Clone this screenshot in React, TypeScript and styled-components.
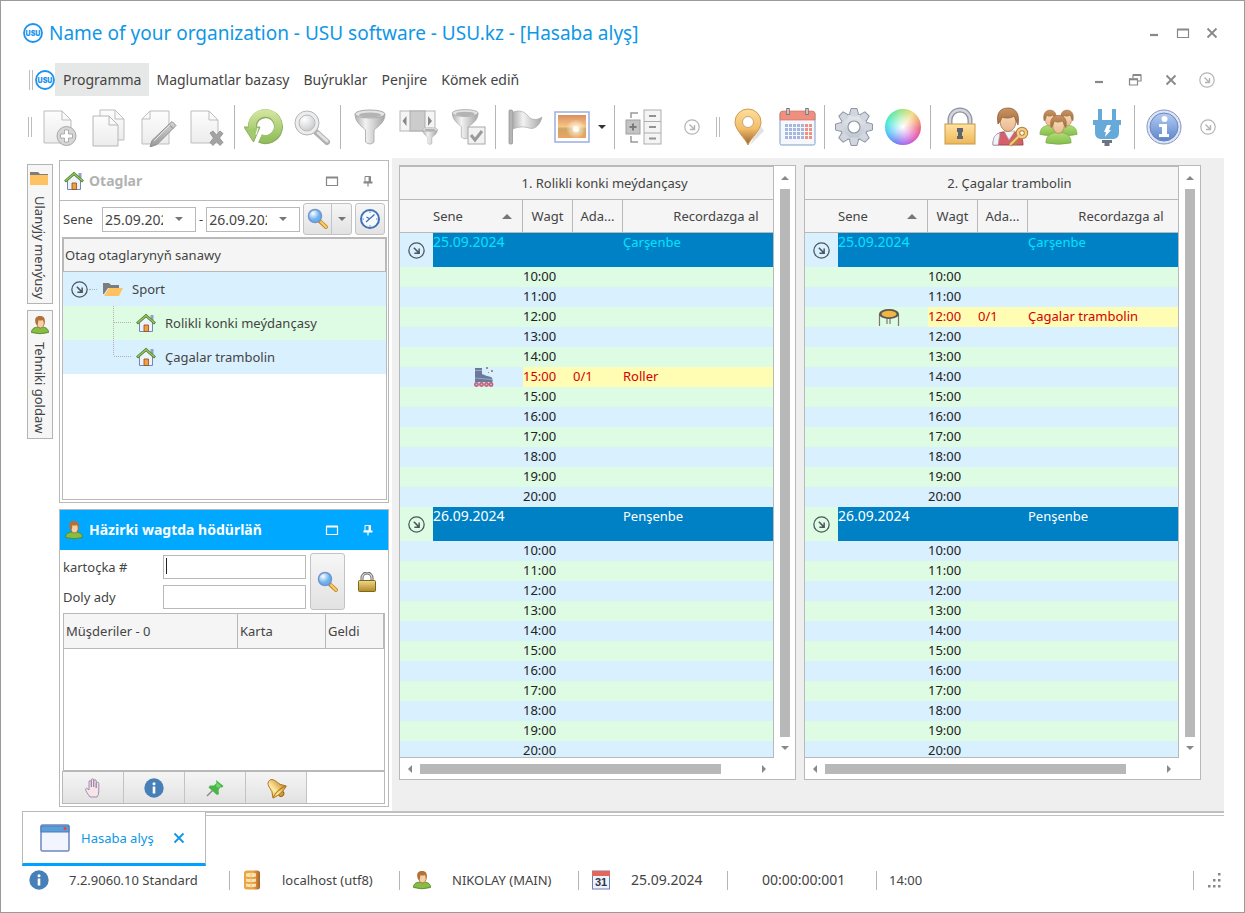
import React from "react";
import styled, { createGlobalStyle, css } from "styled-components";

/* ---------- base ---------- */

const UI_FONT = '"Noto Sans", "Open Sans", "DejaVu Sans", sans-serif';
const ACCENT = "#0f97e6";
const LINE = "#b9b9b9";
const BLUE_ROW = "#d9f0ff";
const GREEN_ROW = "#defbe3";

const GlobalStyle = createGlobalStyle`
  *, *::before, *::after { box-sizing: border-box; }
  body { margin: 0; background: #fff; }
  body, button, input { font-family: ${UI_FONT}; font-size: 13px; line-height: 18px; color: #444; }
  button { background: none; border: 0; padding: 0; cursor: pointer; }
  svg { display: block; flex: none; }
  ul { list-style: none; margin: 0; padding: 0; }
`;

/* ---------- icons ---------- */

const Defs = styled.svg`
  position: absolute;
  width: 0;
  height: 0;
`;

function Gradients() {
  const v = { x1: "0", y1: "0", x2: "0", y2: "1" };
  return (
    <Defs aria-hidden="true">
      <defs>
        <linearGradient id="paper" {...v}><stop offset="0" stopColor="#fdfdfd" /><stop offset="1" stopColor="#ececec" /></linearGradient>
        <linearGradient id="metal" x1="0" y1="0" x2="1" y2="0"><stop offset="0" stopColor="#b0b0b0" /><stop offset=".35" stopColor="#f2f2f2" /><stop offset="1" stopColor="#a4a4a4" /></linearGradient>
        <linearGradient id="grey" {...v}><stop offset="0" stopColor="#d4d4d4" /><stop offset="1" stopColor="#999" /></linearGradient>
        <linearGradient id="green" {...v}><stop offset="0" stopColor="#cfe39a" /><stop offset="1" stopColor="#94c060" /></linearGradient>
        <linearGradient id="gold" {...v}><stop offset="0" stopColor="#ffe3a0" /><stop offset="1" stopColor="#edb758" /></linearGradient>
        <linearGradient id="pin" {...v}><stop offset="0" stopColor="#ffdf9e" /><stop offset=".55" stopColor="#f2bd68" /><stop offset="1" stopColor="#99602f" /></linearGradient>
        <linearGradient id="brass" {...v}><stop offset="0" stopColor="#efd98a" /><stop offset="1" stopColor="#b08a28" /></linearGradient>
        <linearGradient id="bell" x1="0" y1="0" x2="1" y2="0"><stop offset="0" stopColor="#f0bc46" /><stop offset=".35" stopColor="#ffe9a4" /><stop offset="1" stopColor="#c78a22" /></linearGradient>
        <linearGradient id="db" x1="0" y1="0" x2="1" y2="0"><stop offset="0" stopColor="#e9a548" /><stop offset=".6" stopColor="#e6a142" /><stop offset="1" stopColor="#a8622a" /></linearGradient>
        <linearGradient id="sky" {...v}><stop offset="0" stopColor="#b4cdf2" /><stop offset="1" stopColor="#5c86cc" /></linearGradient>
        <linearGradient id="steel" {...v}><stop offset="0" stopColor="#e8ebf0" /><stop offset="1" stopColor="#bcc2cd" /></linearGradient>
        <linearGradient id="shirt" {...v}><stop offset="0" stopColor="#b3dd74" /><stop offset="1" stopColor="#84bd4c" /></linearGradient>
        <linearGradient id="hair" {...v}><stop offset="0" stopColor="#c99463" /><stop offset="1" stopColor="#a36c40" /></linearGradient>
        <linearGradient id="skin" {...v}><stop offset="0" stopColor="#fbe0c0" /><stop offset="1" stopColor="#e8b98c" /></linearGradient>
        <linearGradient id="sunset" {...v}><stop offset="0" stopColor="#d98f62" /><stop offset=".5" stopColor="#f7c484" /><stop offset=".6" stopColor="#cba469" /><stop offset="1" stopColor="#eea45c" /></linearGradient>
        <radialGradient id="glow"><stop offset="0" stopColor="#fffbe6" /><stop offset="1" stopColor="#fffbe6" stopOpacity="0" /></radialGradient>
        <radialGradient id="lens" cx=".4" cy=".35"><stop offset="0" stopColor="#fff" /><stop offset="1" stopColor="#c9cccf" /></radialGradient>
        <radialGradient id="blueLens" cx=".35" cy=".3"><stop offset="0" stopColor="#fff" /><stop offset="1" stopColor="#69b0ee" /></radialGradient>
      </defs>
    </Defs>
  );
}

type IconProps = { size?: number };
const Svg = ({ size = 40, box = 40, children }: { size?: number; box?: number; children: React.ReactNode }) => (
  <svg width={size} height={size} viewBox={`0 0 ${box} ${box}`} fill="none" aria-hidden="true">{children}</svg>
);

const UsuLogo = ({ size = 20 }: IconProps) => (
  <Svg size={size} box={20}>
    <circle cx="10" cy="10" r="9" stroke="#1e93ee" strokeWidth="1.8" fill="#fff" />
    <text x="10" y="12.700" textAnchor="middle" fontFamily="Inter, sans-serif" fontWeight="900" fontSize="7" fill="#1e93ee">USU</text>
  </Svg>
);

const PAGE = "M4 4H22L31 13V36H4Z";
const AddPage = () => (
  <Svg>
    <path d={PAGE} fill="url(#paper)" stroke="#bdbdbd" /><path d="M22 4V13H31" stroke="#bdbdbd" />
    <circle cx="26.500" cy="29" r="9.500" fill="#d6d6d6" stroke="#a8a8a8" />
    <path d="M24.500 23H28.500V27H32.500V31H28.500V35H24.500V31H20.500V27H24.500Z" fill="#fff" stroke="#a0a0a0" strokeWidth=".8" />
  </Svg>
);
const CopyPages = () => (
  <Svg>
    <path d="M11 3H26L35 12V33H11Z" fill="url(#paper)" stroke="#bdbdbd" /><path d="M26 3V12H35" stroke="#bdbdbd" />
    <path d="M4 9H20L29 18V39H4Z" fill="url(#paper)" stroke="#b6b6b6" /><path d="M20 9V18H29" stroke="#b6b6b6" />
  </Svg>
);
const EditPage = () => (
  <Svg>
    <path d="M12 4H31V37H4V12Z" fill="url(#paper)" stroke="#bdbdbd" /><path d="M12 4V12H4" stroke="#bdbdbd" />
    <path d="M34 14.500 38 18.500 19 37.500 12 40 14 33.500Z" fill="url(#grey)" stroke="#8f8f8f" />
    <path d="M31 17.500 35 21.500" stroke="#7f7f7f" /><path d="M16 34 32 18" stroke="#e0e0e0" />
  </Svg>
);
const DeletePage = () => (
  <Svg>
    <path d={PAGE} fill="url(#paper)" stroke="#bdbdbd" /><path d="M22 4V13H31" stroke="#bdbdbd" />
    <path d="M23 26 26 24 29.500 28 33 24 36 26.500 32.500 31 36 35.500 33 38.500 29.500 34.500 26 38.500 23 35.500 26.500 31Z" fill="#a3a3a3" stroke="#8e8e8e" strokeWidth=".8" />
  </Svg>
);
const Refresh = () => (
  <Svg>
    <g transform="translate(-1 0)">
      <path d="M17 31.500A13 13 0 1 0 9.500 21" stroke="#8eac5e" strokeWidth="9" />
      <path d="M1 20H17L10.500 35Z" fill="#a3c96f" stroke="#8eac5e" />
      <path d="M17.500 31A13 13 0 1 0 9.500 21.500" stroke="url(#green)" strokeWidth="7.500" />
      <path d="M13 27.500 15 21" stroke="#fff" strokeWidth="1" />
    </g>
  </Svg>
);
const Magnifier = () => (
  <Svg>
    <g transform="translate(-2 0)">
      <path d="M25 25 36 35" stroke="#b0b0b0" strokeWidth="6" strokeLinecap="round" />
      <path d="M27 26 36 34" stroke="#e2e2e2" strokeWidth="3" strokeLinecap="round" />
      <circle cx="16" cy="16" r="12" fill="url(#lens)" stroke="#b5b5b5" strokeWidth="1" />
      <circle cx="16" cy="16" r="9.500" stroke="#ededed" strokeWidth="3.500" /><circle cx="16" cy="16" r="8" stroke="#b9b9b9" />
    </g>
  </Svg>
);
const funnel = (
  <>
    <path d="M5 7C5 16 13 20 15.500 23V35Q20 39 24 35V23C27 20 35 16 35 7Z" fill="url(#metal)" stroke="#a4a4a4" strokeWidth=".8" />
    <ellipse cx="20" cy="7" rx="15" ry="4" fill="#e4e4e4" stroke="#a9a9a9" />
    <ellipse cx="20" cy="8" rx="11" ry="2.500" fill="#b3b3b3" />
  </>
);
const Funnel = () => <Svg>{funnel}</Svg>;
const FunnelPages = () => (
  <Svg>
    <rect x="1" y="4" width="35" height="20" fill="#f5f5f5" stroke="#b5b5b5" />
    <rect x="11" y="4" width="15" height="20" fill="#cccccc" stroke="#adadad" />
    <path d="M7.500 9V19L3.500 14Z M29 9V19L33 14Z" fill="#888" />
    <g transform="translate(21 19) scale(.5)">{funnel}</g>
  </Svg>
);
const FunnelCheck = () => (
  <Svg>
    <g transform="translate(0 0) scale(.86)">{funnel}</g>
    <rect x="20" y="20" width="17" height="17" fill="#f2f2f2" stroke="#a8a8a8" />
    <path d="M23 28 27 33 34 24" stroke="#9a9a9a" strokeWidth="3" />
  </Svg>
);
const Flag = () => (
  <Svg>
    <rect x="4" y="3" width="3.500" height="34" rx="1" fill="#b5b5b5" stroke="#8e8e8e" strokeWidth=".7" />
    <path d="M8 5C14 3 19 4 23 9C27 14 33 13 37 10C35 18 30 23 24 21C18 19 12 20 8 22Z" fill="url(#metal)" stroke="#a9a9a9" strokeWidth=".7" />
  </Svg>
);
const Picture = () => (
  <svg width="36" height="32" viewBox="0 0 36 32" aria-hidden="true">
    <rect x="1" y="1" width="34" height="30" fill="#fff" stroke="#9aaede" strokeWidth="1.500" />
    <rect x="4" y="4" width="28" height="23" fill="url(#sunset)" />
    <circle cx="22" cy="18" r="10" fill="url(#glow)" /><circle cx="22" cy="18" r="3" fill="#fffef2" />
  </svg>
);
const TreeToggle = () => (
  <Svg>
    <path d="M14 6H7V11 M14 35H7V29" stroke="#9a9a9a" strokeWidth="1.500" />
    <rect x="2" y="13" width="14" height="14" fill="#c3c3c3" stroke="#a0a0a0" /><path d="M5.500 20H12.500M9 16.500V23.500" stroke="#7a7a7a" strokeWidth="2" />
    <rect x="20" y="3" width="17" height="34" fill="#f4f4f4" stroke="#adadad" />
    <path d="M20 14.500H37M20 26H37" stroke="#adadad" /><path d="M25 9H32M25 20H32M25 31.500H32" stroke="#929292" strokeWidth="2" />
  </Svg>
);
const MapPin = () => (
  <Svg>
    <path d="M22 38 36 24 32 18Z" fill="#8a8a8a" opacity=".25" />
    <path d="M20 38C17 31 7 23 7 15A13 13 0 0 1 33 15C33 23 23 31 20 38Z" fill="url(#pin)" stroke="#d09a50" />
    <circle cx="20" cy="15" r="5.500" fill="#fff" stroke="#c9a877" />
  </Svg>
);
const Calendar = () => (
  <Svg>
    <rect x="3" y="5" width="35" height="33" rx="1.500" fill="#f4f7fc" stroke="#7f9dcc" />
    <path d="M3 7Q3 4 6 4H35Q38 4 38 7V13H3Z" fill="#ee8f80" stroke="#d47062" strokeWidth=".7" />
    <path d="M11 1V8M30 1V8" stroke="#777" strokeWidth="3.500" /><path d="M11 2V7M30 2V7" stroke="#ddd" strokeWidth="1.500" />
    {[18, 22, 26, 30].map((y) =>
      [8.5, 12.500, 16.500, 20.500, 24.500, 28.500, 32.500].map((x) => <rect key={`${x}-${y}`} x={x - .5} y={y - 1} width="3" height="3" fill={x > 26 ? "#f09080" : "#a6b6dc"} />)
    )}
  </Svg>
);
const Gear = () => (
  <Svg>
    {[0, 45, 90, 135, 180, 225, 270, 315].map((a) => (
      <path key={a} transform={`rotate(${a} 20 20)`} d="M15 9 17 1.500H23L25 9Z" fill="#cfd4dc" stroke="#8f97a6" />
    ))}
    <circle cx="20" cy="20" r="13.500" fill="url(#steel)" stroke="#8f97a6" />
    {[0, 45, 90, 135, 180, 225, 270, 315].map((a) => (
      <path key={a} transform={`rotate(${a} 20 20)`} d="M15.800 9.500 17.500 3H22.500L24.200 9.500Z" fill="#d2d7df" />
    ))}
    <circle cx="20" cy="20" r="6" fill="#fff" stroke="#8f97a6" strokeWidth="1.200" />
  </Svg>
);
const ColorWheel = styled.span`
  width: 36px;
  height: 36px;
  border-radius: 50%;
  background:
    radial-gradient(circle, #fff 0, rgba(255, 255, 255, 0.6) 30%, rgba(255, 255, 255, 0) 72%),
    conic-gradient(#a4e07a, #f2d878 35deg, #f2a06c 65deg, #ea5e78 95deg, #e44fae 125deg, #b45be8 165deg, #6b7bf4 205deg, #45c4f6 250deg, #3fe6d4 285deg, #5ee896 325deg, #a4e07a);
`;
const Padlock = () => (
  <Svg>
    <path d="M10 18V13A10 10 0 0 1 30 13V18" stroke="#8b919b" strokeWidth="5" /><path d="M10 18V13A10 10 0 0 1 30 13V18" stroke="#d3d7dd" strokeWidth="2.500" />
    <rect x="5" y="17" width="30" height="20" fill="url(#gold)" stroke="#c79a4c" />
    <path d="M17 21H23V25H22V29H23V32H17V29H18V25H17Z" fill="#5d6370" />
  </Svg>
);
const UserKey = () => (
  <Svg>
    <path d="M4 38C4 29 8 26 14 25H26C31 26 34 30 34 38Z" fill="#d6606a" stroke="#9c4a50" />
    <path d="M4 38C4 30 6 27 11 26L9 38ZM15 24 20 33 26 24Z" fill="#f1f3f8" stroke="#a0a6b8" strokeWidth=".7" />
    <ellipse cx="19" cy="14" rx="8" ry="10.500" fill="url(#skin)" stroke="#a87445" strokeWidth=".8" />
    <path d="M9 17C7 6 11 1 19 1C27 1 31 7 29 18C27 14 26 11 25 9C21 12 15 11 13 10C12 13 11 15 9 17Z" fill="url(#hair)" stroke="#8a5730" strokeWidth=".7" />
    <circle cx="33" cy="26" r="4" stroke="#b87f38" strokeWidth="4.500" /><path d="M30 29 21 38M25 34 28 37" stroke="#b87f38" strokeWidth="4" />
    <circle cx="33" cy="26" r="4" stroke="#f0cc86" strokeWidth="2.500" /><path d="M30 29 21 38" stroke="#f0cc86" strokeWidth="2" />
  </Svg>
);
const person = (
  <>
    <path d="M-12 22C-12 14 -7 11 0 11S12 14 12 22Q0 25 -12 22Z" fill="url(#shirt)" stroke="#7aa64a" strokeWidth=".7" />
    <ellipse cx="0" cy="4" rx="5.500" ry="8" fill="url(#skin)" stroke="#b07c50" strokeWidth=".7" />
    <path d="M-7 6C-9 -3 -5 -7 0 -7S9 -3 7 6C5 3 5 1 4 -1C0 1 -3 0 -4 -1C-5 2 -5 4 -7 6Z" fill="url(#hair)" stroke="#9c6c40" strokeWidth=".6" />
  </>
);
const Users = () => (
  <Svg>
    <g transform="translate(12 9) scale(.84)">{person}</g><g transform="translate(29 9) scale(.84)">{person}</g>
    <g transform="translate(20.500 15) scale(1.050 .95)">{person}</g>
  </Svg>
);
const Plug = () => (
  <Svg>
    <path d="M11 2H15V13H25V2H29V13H34V18H32V26Q32 31 27 32H13Q8 31 8 26V18H6V13H11Z" fill="#66aada" />
    <path d="M15 33H25V36H22.500V39H17.500V36H15Z" fill="#6b7480" /><path d="M20 18H24L22 23H24L18 30 19 25H17Z" fill="#fff" />
  </Svg>
);
const InfoBig = () => (
  <Svg>
    <circle cx="20" cy="20" r="17" fill="#dfe5f2" stroke="#8294c2" />
    <circle cx="20" cy="20" r="14" fill="url(#sky)" stroke="#6a86c2" />
    <circle cx="20.500" cy="12" r="3" fill="#fff" /><path d="M15 17H23V27H25V30H15V27H18V20H15Z" fill="#fff" />
  </Svg>
);
const RingArrow = ({ size = 16, color = "#b4b4b4" }: IconProps & { color?: string }) => (
  <Svg size={size} box={16}>
    <circle cx="8" cy="8" r="7.200" stroke={color} strokeWidth="1.200" />
    <path d="M5.500 5.500 10 10M10.500 6V10.500H6" stroke={color} strokeWidth="1.400" />
  </Svg>
);

const House = () => (
  <Svg size={20} box={20}>
    <path d="M14.500 2H17.500V7H14.500Z" fill="#8fa2c8" />
    <path d="M3.500 9.500 10 3.500 16.500 9.500V18.500H3.500Z" fill="#eef2fb" stroke="#7585b5" />
    <path d="M8 12H12.500V18.500H8Z" fill="#f0a044" stroke="#8c4d1c" strokeWidth=".8" />
    <path d="M1 10.500 10 2.500 19 10.500" stroke="#477c2c" strokeWidth="2.800" /><path d="M1.500 10 10 2.500 18.500 10" stroke="#9ccb5b" strokeWidth="1.300" />
  </Svg>
);
const SmallUser = () => (
  <Svg size={20} box={20}>
    <path d="M1.500 17.500C1.500 13 5 12 10 12S18.500 13 18.500 17.500Q10 20 1.500 17.500Z" fill="#86bd42" stroke="#507c22" strokeWidth=".8" />
    <ellipse cx="10.500" cy="7.500" rx="3.800" ry="5.500" fill="#f6cfa2" stroke="#965c2c" strokeWidth=".7" />
    <path d="M5.500 8C4.500 3 6 1 10 1S15.500 3 14.500 9Q13.500 7 13 5Q10 6 8.500 5Q8 9 7.500 10Q6 10 5.500 8Z" fill="#b3703a" />
  </Svg>
);
const Folder = ({ open }: { open?: boolean }) => (
  <Svg size={20} box={20}>
    <path d={open ? "M0 4H6L8 6H16V9H5L1 15H0Z" : "M0 3H8L10 5H18V8H0Z"} fill="#7d7d7d" />
    <path d={open ? "M6 9H20L16 17H1Z" : "M0 6H18V16H0Z"} fill="#ffc261" />
  </Svg>
);
const BlueMagnifier = () => (
  <Svg size={22} box={22}>
    <path d="M12.500 13 19 19" stroke="#c98a30" strokeWidth="4" strokeLinecap="round" /><path d="M14 14 19 19" stroke="#f8cf6a" strokeWidth="2" strokeLinecap="round" />
    <circle cx="8" cy="8" r="6.500" fill="url(#blueLens)" stroke="#7396cf" strokeWidth="1.500" />
  </Svg>
);
const Clock = () => (
  <Svg size={22} box={22}>
    <circle cx="11" cy="11" r="9" fill="#f6f9fd" stroke="#3f72b8" strokeWidth="2" />
    <path d="M11 3.500V5M11 17V18.500M3.500 11H5M17 11H18.500" stroke="#5b83b8" /><path d="M7 14 15.500 6.500M7.500 9 11 11" stroke="#3f72b8" strokeWidth="1.300" />
  </Svg>
);
const SmallLock = () => (
  <Svg size={20} box={20}>
    <path d="M5 10V6A5 5 0 0 1 15 6V10" stroke="#666" strokeWidth="3" /><path d="M5 10V6A5 5 0 0 1 15 6V10" stroke="#ddd" strokeWidth="1.200" />
    <rect x="1.500" y="8.500" width="17" height="11" rx="1" fill="url(#brass)" stroke="#82651c" />
  </Svg>
);
const Hand = () => (
  <Svg size={20} box={20}>
    <path d="M7 19C5 16 3 14 2.500 11Q3 9.500 5 11L6 12V4Q6 2.500 7 2.500T8.300 4V9V2Q8.300 .8 9.500 .8T10.700 2V9V3Q10.700 1.700 12 1.700T13.200 3V10V5.500Q13.200 4.300 14.500 4.300T15.800 5.500V13Q15.800 17 14 19Z" fill="#f6e4e8" stroke="#9a83a8" strokeWidth=".9" />
  </Svg>
);
const InfoDot = () => (
  <Svg size={20} box={20}>
    <circle cx="10" cy="10" r="9.700" fill="#477fb9" /><circle cx="10" cy="5.800" r="1.500" fill="#fff" /><rect x="8.700" y="8.500" width="2.600" height="7" fill="#fff" />
  </Svg>
);
const GreenPin = () => (
  <Svg size={20} box={20}>
    <path d="M8 12 2 18" stroke="#888" strokeWidth="1.400" /><path d="M11 2 18.500 8 17 9.500 15 9.500 13.500 12.500 14 16 12 17 3.500 9.500 5 7.500 9 7.500 11.500 5Z" fill="#4ab548" /><path d="M12 4.500 16 8 13 10 11 8Z" fill="#74d46a" />
  </Svg>
);
const Bell = () => (
  <Svg size={22} box={22}>
    <g transform="rotate(-42 11 11)">
      <circle cx="11" cy="18.500" r="2.800" fill="#d6a02f" stroke="#946412" />
      <path d="M11 1C6.500 1 6.500 7 5.500 11L2 16.500Q11 19.500 20 16.500L16.500 11C15.500 7 15.500 1 11 1Z" fill="url(#bell)" stroke="#a87420" strokeWidth=".9" />
      <path d="M2.500 16Q11 13 19.500 16" stroke="#b07c22" />
    </g>
  </Svg>
);
const WindowIcon = () => (
  <svg width="30" height="28" viewBox="0 0 30 28" aria-hidden="true">
    <rect x="1" y="1" width="28" height="26" rx="1.500" fill="#f2f5fd" stroke="#6d87c0" strokeWidth="1.500" />
    <path d="M1 2H29V8H1Z" fill="#5c9ed8" stroke="#4a7cbf" /><circle cx="25" cy="4.500" r="1.500" fill="#f2422e" />
  </svg>
);
const Database = () => (
  <Svg size={20} box={20}>
    <path d="M2 3Q2 .5 5 .5H15Q18 .5 18 3V17Q18 19.500 15 19.500H5Q2 19.500 2 17Z" fill="url(#db)" />
    <path d="M4 3.500Q9 2 14 3.500V6.500Q9 7.500 4 6.500ZM4 8.500Q9 9.500 14 8.500V11.500Q9 12.500 4 11.500ZM4 13.500Q9 14.500 14 13.500V16.500Q9 18 4 16.500Z" fill="#fbe3b0" />
    <path d="M9 3V17.500" stroke="#efbf74" />
  </Svg>
);
const Day31 = () => (
  <Svg size={20} box={20}>
    <rect x="1.500" y="1" width="17" height="18" fill="#eef2fb" stroke="#6b82b4" /><rect x="1" y="1" width="18" height="5" fill="#e2675c" />
    <text x="10" y="16" textAnchor="middle" fontFamily='"Liberation Sans", sans-serif' fontWeight="700" fontSize="11" fill="#334">31</text>
  </Svg>
);
const Skate = () => (
  <Svg size={20} box={20}>
    <path d="M1 1H8V7Q12 9 17 10Q19 11 18.500 15H1Z" fill="#6b7a9b" /><path d="M1 3.500H8M1 11 18 12.500" stroke="#9aa6c2" />
    {[2.500, 7.500, 12.500, 17].map((x) => <circle key={x} cx={x} cy="17.500" r="1.700" stroke="#c05c74" strokeWidth="1.500" fill="#d9b3c2" />)}
    <path d="M12 0H14V2H12ZM17 3H19V5H17ZM14 5H15V6H14Z" fill="#a09080" />
  </Svg>
);
const Trampoline = () => (
  <svg width="22" height="20" viewBox="0 0 22 20" fill="none" aria-hidden="true">
    <path d="M1.500 7V19M20.500 7V19M9 9V17M12 9V17" stroke="#777" strokeWidth="1.200" />
    <ellipse cx="11" cy="7" rx="10" ry="5" fill="#5a5a52" /><ellipse cx="11" cy="7" rx="7.500" ry="3.200" fill="#f3b443" />
  </svg>
);

const Minimize = () => <Svg size={14} box={14}><path d="M3 9H11" stroke="#888" strokeWidth="2.200" /></Svg>;
const Maximize = ({ color = "#888" }: { color?: string }) => (
  <Svg size={14} box={14}><path d="M1.500 3.500H12.500V11.500H1.500Z" stroke={color} strokeWidth="1.200" /><path d="M1 3.500H13" stroke={color} strokeWidth="2" /></Svg>
);
const Restore = () => (
  <Svg size={14} box={14}>
    <path d="M5 5V2H13V8H9.500" stroke="#888" strokeWidth="1.200" /><path d="M5 2H13" stroke="#888" strokeWidth="2" />
    <path d="M1.500 6H9.500V12H1.500Z" stroke="#888" strokeWidth="1.200" /><path d="M1 6.300H10" stroke="#888" strokeWidth="2" />
  </Svg>
);
const Cross = ({ color = "#888" }: { color?: string }) => (
  <Svg size={12} box={12}><path d="M1.500 1.500 10.500 10.500M10.500 1.500 1.500 10.500" stroke={color} strokeWidth="1.800" /></Svg>
);
const Tack = ({ color = "#888" }: { color?: string }) => (
  <Svg size={12} box={12}><path d="M3 1.500H8.500V7H3Z" stroke={color} /><path d="M7.500 1V7.500M1.500 7.500H10.500" stroke={color} strokeWidth="1.800" /><path d="M6 7.500V11.500" stroke={color} strokeWidth="1.200" /></Svg>
);

/* ---------- shared parts ---------- */

const Caret = styled.span<{ $dir?: "up" | "down" | "left" | "right"; $size?: number; $color?: string }>`
  width: 0;
  height: 0;
  flex: none;
  border: ${(p) => p.$size ?? 4}px solid transparent;
  ${(p) => {
    const c = p.$color ?? "#777";
    const s = p.$size ?? 4;
    if (p.$dir === "up") return css`border-bottom-color: ${c}; border-top-width: 0; border-bottom-width: ${s}px;`;
    if (p.$dir === "left") return css`border-right-color: ${c}; border-left-width: 0;`;
    if (p.$dir === "right") return css`border-left-color: ${c}; border-right-width: 0;`;
    return css`border-top-color: ${c}; border-bottom-width: 0; border-top-width: ${s}px;`;
  }}
`;

const Grip = styled.span`
  width: 4px;
  height: 20px;
  flex: none;
  border: solid #bdbdbd;
  border-width: 0 1px;
`;

const IconButton = styled.button<{ $w?: number }>`
  display: flex;
  align-items: center;
  justify-content: center;
  width: ${(p) => p.$w ?? 28}px;
  height: 28px;
`;

/* ---------- frame ---------- */

const Window = styled.div`
  display: flex;
  flex-direction: column;
  height: 100vh;
  min-height: 640px;
  border: 1px solid #9b9b9b;
  background: #fff;
`;

const TitleBar = styled.header`
  display: flex;
  align-items: center;
  gap: 6px;
  height: 62px;
  padding: 2px 18px 0 22px;
`;
const Title = styled.h1`
  flex: 1;
  margin: 0;
  font-size: 19px;
  line-height: 28px;
  font-weight: 400;
  color: ${ACCENT};
  white-space: nowrap;
`;
const Controls = styled.div<{ $gap?: number }>`
  display: flex;
  align-items: center;
  gap: ${(p) => p.$gap ?? 0}px;
`;

const MenuBar = styled.nav`
  display: flex;
  align-items: center;
  height: 33px;
  padding: 0 23px 0 28px;
`;
const MenuLogo = styled.span`
  margin: 0 0 0 2px;
`;
const MenuItem = styled.button<{ $active?: boolean }>`
  height: 33px;
  padding: 0 ${(p) => (p.$active ? 8 : 7)}px;
  font-size: 14px;
  background: ${(p) => (p.$active ? "#e6e8e7" : "transparent")};
  white-space: nowrap;
`;
const Spacer = styled.span`
  flex: 1;
`;

const Toolbar = styled.div`
  display: flex;
  align-items: center;
  height: 62px;
  padding: 0 17px 0 27px;
`;
const Tools = styled.div`
  display: flex;
  align-items: center;
  padding-left: 3px;
`;
const Tool = styled.button<{ $w?: number }>`
  display: flex;
  align-items: center;
  justify-content: center;
  gap: 8px;
  width: ${(p) => p.$w ?? 49}px;
  height: 44px;
`;
const Divider = styled.span`
  width: 1px;
  height: 44px;
  margin: 0 4px 0 3px;
  background: #b5b5b5;
`;

const Body = styled.main`
  display: flex;
  flex: 1;
  min-height: 0;
  padding: 0 20px 0 26px;
`;

const SideTabs = styled.div`
  display: flex;
  flex-direction: column;
  gap: 6px;
  padding: 6px 6px 0 0;
`;
const SideTab = styled.button`
  display: flex;
  flex-direction: column;
  align-items: center;
  gap: 7px;
  width: 26px;
  padding: 4px 0;
  border: 1px solid #b4b4b4;
  background: #f6f6f6;
`;
const SideLabel = styled.span`
  writing-mode: vertical-rl;
  line-height: 20px;
  white-space: nowrap;
`;

const LeftColumn = styled.div`
  display: flex;
  flex-direction: column;
  gap: 6px;
  width: 330px;
  padding: 2px 0 4px;
`;
const Panel = styled.section<{ $grow: number }>`
  display: flex;
  flex-direction: column;
  flex: ${(p) => p.$grow} 1 0;
  min-height: 0;
  border: 1px solid ${LINE};
`;
const PanelHead = styled.header<{ $active?: boolean }>`
  display: flex;
  align-items: center;
  gap: 5px;
  height: 40px;
  flex: none;
  padding: 0 12px 0 4px;
  background: ${(p) => (p.$active ? "#00a8ff" : "#fff")};
  color: ${(p) => (p.$active ? "#fff" : "#b2b2b2")};
  border-bottom: 1px solid ${(p) => (p.$active ? "#00a8ff" : LINE)};
`;
const PanelTitle = styled.h2`
  flex: 1;
  margin: 0;
  font-size: 14px;
  line-height: 18px;
  font-weight: 700;
  white-space: nowrap;
`;

const Filters = styled.form`
  display: flex;
  align-items: center;
  gap: 3px;
  height: 36px;
  flex: none;
  padding: 0 2px 0 3px;
`;
const DateLabel = styled.label`
  width: 36px;
`;
const DateField = styled.span`
  display: flex;
  align-items: center;
  width: 94px;
  height: 25px;
  border: 1px solid ${LINE};
`;
const DateInput = styled.input`
  width: 60px;
  height: 23px;
  border: 0;
  padding: 0 0 0 2px;
  font-size: 14px;
  outline: 0;
  background: transparent;
`;
const Flat = styled.button`
  display: flex;
  align-items: center;
  justify-content: center;
  flex: 1;
  height: 100%;
`;
const raised = css`
  display: flex;
  align-items: center;
  justify-content: center;
  border: 1px solid #c3c3c3;
  border-radius: 3px;
  background: linear-gradient(#f6f6f6, #e2e2e2);
`;
const SplitButton = styled.span`
  ${raised}
  width: 49px;
  height: 32px;
`;
const SplitMain = styled.button`
  display: flex;
  align-items: center;
  justify-content: center;
  width: 28px;
  height: 100%;
  border-right: 1px solid #c3c3c3;
`;
const RaisedButton = styled.button<{ $w: number; $h: number }>`
  ${raised}
  width: ${(p) => p.$w}px;
  height: ${(p) => p.$h}px;
`;

const TreeBox = styled.div`
  flex: 1;
  min-height: 0;
  margin: 0 1px 2px 2px;
  border: 1px solid ${LINE};
  overflow: hidden;
`;
const TreeHead = styled.h3`
  margin: 0;
  height: 34px;
  padding: 0 1px;
  border: 1px solid ${LINE};
  background: #f5f5f5;
  font-size: 13px;
  font-weight: 400;
  line-height: 32px;
`;
const TreeRow = styled.div<{ $green?: boolean; $child?: boolean }>`
  display: flex;
  align-items: center;
  gap: 9px;
  height: 34px;
  padding-left: ${(p) => (p.$child ? 50 : 8)}px;
  background: ${(p) => (p.$green ? GREEN_ROW : BLUE_ROW)};
`;
const Branch = styled.svg`
  margin-right: -4px;
`;
const Dots = styled.span`
  width: 8px;
  margin: 0 -3px 0 -8px;
  border-top: 1px dotted #b0b0b0;
`;

const VisitForm = styled.form`
  display: grid;
  grid-template-columns: 96px 1fr 35px 36px;
  grid-template-rows: 25px 25px;
  gap: 5px 4px;
  align-items: center;
  justify-items: stretch;
  padding: 4px 3px;
`;
const SearchCell = styled.div`
  grid-area: 1 / 3 / 3 / 4;
`;
const LockCell = styled.div`
  grid-area: 1 / 4 / 3 / 5;
  justify-self: center;
`;
const TextCell = styled.div`
  position: relative;
`;
const TextBox = styled.input`
  display: block;
  width: 100%;
  height: 24px;
  padding: 0 4px;
  border: 1px solid ${LINE};
  outline: 0;
`;
const TextCursor = styled.span`
  position: absolute;
  left: 3px;
  top: 3px;
  width: 1px;
  height: 16px;
  background: #222;
`;
const ClientBox = styled.div`
  flex: 1;
  min-height: 0;
  margin: 0 3px;
  border: 1px solid ${LINE};
`;
const ClientTable = styled.table`
  width: 100%;
  table-layout: fixed;
  border-collapse: collapse;
`;
const ClientTh = styled.th<{ $w?: string }>`
  width: ${(p) => p.$w ?? "auto"};
  height: 34px;
  padding: 0 2px;
  border: 1px solid ${LINE};
  border-top: 0;
  border-left: 0;
  background: #f5f5f5;
  font-weight: 400;
  text-align: left;
`;
const ActionBar = styled.div`
  display: grid;
  grid-template-columns: repeat(4, 61px) 1fr;
  height: 33px;
  flex: none;
  margin: 0 3px 2px 2px;
  border: 1px solid ${LINE};
`;
const Action = styled.button`
  display: flex;
  align-items: center;
  justify-content: center;
  border-right: 1px solid #c3c3c3;
  background: linear-gradient(#f5f5f5, #e2e2e2);
`;

const Workspace = styled.div`
  display: flex;
  gap: 8px;
  flex: 1;
  min-width: 0;
  margin-left: 3px;
  padding: 7px 23px 31px 7px;
  background: #efefef;
`;
const Sheet = styled.section`
  display: grid;
  grid-template: 1fr 21px / 1fr 21px;
  flex: 1;
  min-width: 0;
  border: 1px solid ${LINE};
  background: #fff;
`;
const SheetView = styled.div`
  overflow: hidden;
  min-height: 0;
  border: solid ${LINE};
  border-width: 1px 1px 1px 0;
`;
const SheetTable = styled.table`
  width: calc(100% + 37px);
  table-layout: fixed;
  border-collapse: separate;
  border-spacing: 0;
  font-size: 13px;
  color: #222;
`;
const HeadCell = styled.th<{ $start?: boolean }>`
  height: 33px;
  padding: ${(p) => (p.$start ? "0 10px 0 33px" : "0")};
  border: solid ${LINE};
  border-width: 0 1px 1px 0;
  background: #f5f5f5;
  color: #444;
  font-weight: 400;
  text-align: center;
`;
const SortLabel = styled.span`
  display: flex;
  align-items: center;
  justify-content: space-between;
`;
const Slot = styled.tr<{ $green: boolean }>`
  height: 20px;
  background: ${(p) => (p.$green ? GREEN_ROW : BLUE_ROW)};
`;
const DayRow = styled(Slot)`
  height: 34px;
`;
const Td = styled.td<{ $booked?: boolean }>`
  padding: 0;
  height: 20px;
  line-height: 18px;
  vertical-align: top;
  white-space: nowrap;
  ${(p) => p.$booked && css`background: #fffcb3; color: #d40000;`}
`;
const TdIcon = styled.td`
  padding: 0 0 0 12px;
  line-height: 0;
  & > svg { margin: 0 auto; }
`;
const ToggleTd = styled.td`
  padding: 0 0 0 8px;
`;
const DayTd = styled.td<{ $today?: boolean; $date?: boolean }>`
  height: 34px;
  padding: 0;
  vertical-align: top;
  background: #0081c6;
  color: ${(p) => (p.$today ? "#00e4ff" : "#fff")};
  font-size: ${(p) => (p.$date ? 14 : 13)}px;
  line-height: 18px;
`;

const VScroll = styled.div`
  display: flex;
  flex-direction: column;
  align-items: center;
  gap: 9px;
  padding: 10px 0 8px;
`;
const HScroll = styled.div`
  display: flex;
  align-items: center;
  gap: 8px;
  padding: 0 8px;
`;
const VThumb = styled.span`
  width: 10px;
  flex: 1;
  background: #b8b8b8;
`;
const HTrack = styled.span`
  flex: 1;
  display: flex;
`;
const HThumb = styled.span`
  width: 90%;
  height: 10px;
  background: #b8b8b8;
`;

const Footer = styled.footer`
  flex: none;
  padding: 0 20px 18px 21px;
`;
const TabStrip = styled.div`
  height: 55px;
  background: linear-gradient(#c0c0c0 0 2px, #fff 2px 4px, #c0c0c0 4px 5px, #fff 5px);
`;
const DocTab = styled.div`
  display: flex;
  align-items: center;
  width: 184px;
  height: 55px;
  padding: 0 20px 0 17px;
  border: 1px solid ${LINE};
  border-bottom: 3px solid #00a2ff;
  background: #fff;
  color: ${ACCENT};
`;
const DocLink = styled.a`
  flex: 1;
  margin-left: 11px;
  color: inherit;
  text-decoration: none;
  white-space: nowrap;
`;
const StatusBar = styled.div`
  display: flex;
  align-items: center;
  height: 28px;
  padding-left: 7px;
  white-space: nowrap;
`;
const StatusItem = styled.span<{ $w: number; $inset?: number; $clock?: boolean }>`
  display: flex;
  align-items: center;
  gap: 20px;
  width: ${(p) => p.$w}px;
  padding-left: ${(p) => p.$inset ?? 12}px;
  font-size: ${(p) => (p.$clock ? 14 : 13)}px;
`;
const StatusSep = styled.span`
  width: 1px;
  height: 19px;
  background: #b5b5b5;
`;

/* ---------- views ---------- */

type Entry = { time: string; count?: string; name?: string; icon?: React.ReactNode };
type Day = { date: string; weekday: string; today?: boolean; entries: Entry[] };

const HOURS = ["10:00", "11:00", "12:00", "13:00", "14:00", "15:00", "16:00", "17:00", "18:00", "19:00", "20:00"];
const hours = (booking?: Entry): Entry[] =>
  HOURS.flatMap((time) => (booking && booking.time === time ? [booking, { time }] : [{ time }]));

const ROOMS: { title: string; days: Day[] }[] = [
  {
    title: "1. Rolikli konki meýdançasy",
    days: [
      { date: "25.09.2024", weekday: "Çarşenbe", today: true, entries: hours({ time: "15:00", count: "0/1", name: "Roller", icon: <Skate /> }) },
      { date: "26.09.2024", weekday: "Penşenbe", entries: hours() },
    ],
  },
  {
    title: "2. Çagalar trambolin",
    days: [
      { date: "25.09.2024", weekday: "Çarşenbe", today: true, entries: hours({ time: "12:00", count: "0/1", name: "Çagalar trambolin", icon: <Trampoline /> }) },
      { date: "26.09.2024", weekday: "Penşenbe", entries: hours() },
    ],
  },
];

function RoomSheet({ title, days }: { title: string; days: Day[] }) {
  let row = 0;
  return (
    <Sheet>
      <SheetView>
        <SheetTable>
          <colgroup>
            <col width="33" /><col width="90" /><col width="50" /><col width="50" /><col />
          </colgroup>
          <thead>
            <tr><HeadCell colSpan={5}>{title}</HeadCell></tr>
            <tr>
              <HeadCell colSpan={2} $start><SortLabel>Sene<Caret $dir="up" $size={5} /></SortLabel></HeadCell>
              <HeadCell>Wagt</HeadCell>
              <HeadCell>Ada...</HeadCell>
              <HeadCell>Recordazga al</HeadCell>
            </tr>
          </thead>
          {days.map((day) => (
            <tbody key={day.date}>
              <DayRow $green={row++ % 2 === 1}>
                <ToggleTd><RingArrow size={17} color="#4d555c" /></ToggleTd>
                <DayTd $today={day.today} $date colSpan={3}>{day.date}</DayTd>
                <DayTd $today={day.today}>{day.weekday}</DayTd>
              </DayRow>
              {day.entries.map((e, i) => (
                <Slot key={i} $green={row++ % 2 === 1}>
                  <td />
                  <TdIcon>{e.icon}</TdIcon>
                  <Td $booked={!!e.name}>{e.time}</Td>
                  <Td $booked={!!e.name}>{e.count}</Td>
                  <Td $booked={!!e.name}>{e.name}</Td>
                </Slot>
              ))}
            </tbody>
          ))}
        </SheetTable>
      </SheetView>
      <VScroll><Caret $dir="up" $color="#888" /><VThumb /><Caret $color="#888" /></VScroll>
      <HScroll><Caret $dir="left" $color="#888" /><HTrack><HThumb /></HTrack><Caret $dir="right" $color="#888" /></HScroll>
    </Sheet>
  );
}

const TOOLS: (React.ComponentType | "|")[] = [AddPage, CopyPages, EditPage, DeletePage, "|", Refresh, Magnifier, "|", Funnel, FunnelPages, FunnelCheck, "|", Flag];
const MORE_TOOLS: (React.ComponentType | "|")[] = [MapPin, Calendar, "|", Gear, ColorWheel, "|", Padlock, UserKey, Users, Plug, "|", InfoBig];

const renderTools = (list: (React.ComponentType | "|")[]) =>
  list.map((T, i) => (T === "|" ? <Divider key={i} /> : <Tool key={i} type="button"><T /></Tool>));

export default function App() {
  return (
    <Window>
      <GlobalStyle />
      <Gradients />
      <TitleBar>
        <UsuLogo />
        <Title>Name of your organization - USU software - USU.kz - [Hasaba alyş]</Title>
        <Controls $gap={1}>
          <IconButton aria-label="Minimize"><Minimize /></IconButton>
          <IconButton aria-label="Maximize"><Maximize /></IconButton>
          <IconButton aria-label="Close"><Cross /></IconButton>
        </Controls>
      </TitleBar>

      <MenuBar>
        <Grip />
        <MenuLogo><UsuLogo /></MenuLogo>
        <MenuItem $active>Programma</MenuItem>
        <MenuItem>Maglumatlar bazasy</MenuItem>
        <MenuItem>Buýruklar</MenuItem>
        <MenuItem>Penjire</MenuItem>
        <MenuItem>Kömek ediň</MenuItem>
        <Spacer />
        <Controls $gap={8}>
          <IconButton aria-label="Minimize document"><Minimize /></IconButton>
          <IconButton aria-label="Restore document"><Restore /></IconButton>
          <IconButton aria-label="Close document"><Cross /></IconButton>
          <IconButton aria-label="More commands"><RingArrow /></IconButton>
        </Controls>
      </MenuBar>

      <Toolbar>
        <Grip />
        <Tools>
          {renderTools(TOOLS)}
          <Tool type="button" $w={62} aria-label="Background"><Picture /><Caret $color="#333" /></Tool>
          <Divider />
          <Tool type="button" aria-label="Expand groups"><TreeToggle /></Tool>
          <Tool type="button" $w={48} aria-label="More tools"><RingArrow /></Tool>
        </Tools>
        <Grip />
        <Tools>{renderTools(MORE_TOOLS)}</Tools>
        <Spacer />
        <Tool type="button" $w={40} aria-label="More options"><RingArrow /></Tool>
      </Toolbar>

      <Body>
        <SideTabs>
          <SideTab type="button"><Folder /><SideLabel>Ulanyjy menýusy</SideLabel></SideTab>
          <SideTab type="button"><SmallUser /><SideLabel>Tehniki goldaw</SideLabel></SideTab>
        </SideTabs>

        <LeftColumn>
          <Panel $grow={344}>
            <PanelHead>
              <House />
              <PanelTitle>Otaglar</PanelTitle>
              <Controls $gap={14}>
                <IconButton aria-label="Maximize panel"><Maximize /></IconButton>
                <IconButton $w={16} aria-label="Pin panel"><Tack /></IconButton>
              </Controls>
            </PanelHead>
            <Filters>
              <DateLabel htmlFor="from">Sene</DateLabel>
              <DateField><DateInput id="from" defaultValue="25.09.2024" /><Flat type="button" aria-label="Pick start"><Caret /></Flat></DateField>
              <label htmlFor="to">-</label>
              <DateField><DateInput id="to" defaultValue="26.09.2024" /><Flat type="button" aria-label="Pick end"><Caret /></Flat></DateField>
              <SplitButton>
                <SplitMain type="button" aria-label="Search"><BlueMagnifier /></SplitMain>
                <Flat type="button" aria-label="Search options"><Caret /></Flat>
              </SplitButton>
              <RaisedButton type="button" $w={30} $h={32} aria-label="Now"><Clock /></RaisedButton>
            </Filters>
            <TreeBox>
              <TreeHead>Otag otaglarynyň sanawy</TreeHead>
              <ul>
                <li>
                  <TreeRow><RingArrow size={17} color="#4d555c" /><Dots /><Folder open />Sport</TreeRow>
                  <ul>
                    <li>
                      <TreeRow $child $green>
                        <Branch width="18" height="34" viewBox="0 0 18 34" aria-hidden="true"><path d="M.5 0V34M1 16.500H18" stroke="#b0b0b0" strokeDasharray="1 1" /></Branch>
                        <House />Rolikli konki meýdançasy
                      </TreeRow>
                    </li>
                    <li>
                      <TreeRow $child>
                        <Branch width="18" height="34" viewBox="0 0 18 34" aria-hidden="true"><path d="M.5 0V16M1 16.500H18" stroke="#b0b0b0" strokeDasharray="1 1" /></Branch>
                        <House />Çagalar trambolin
                      </TreeRow>
                    </li>
                  </ul>
                </li>
              </ul>
            </TreeBox>
          </Panel>

          <Panel $grow={298}>
            <PanelHead $active>
              <SmallUser />
              <PanelTitle>Häzirki wagtda hödürläň</PanelTitle>
              <Controls $gap={14}>
                <IconButton aria-label="Maximize panel"><Maximize color="#fff" /></IconButton>
                <IconButton $w={16} aria-label="Pin panel"><Tack color="#fff" /></IconButton>
              </Controls>
            </PanelHead>
            <VisitForm>
              <label htmlFor="card">kartoçka #</label>
              <TextCell><TextBox id="card" /><TextCursor /></TextCell>
              <label htmlFor="fullname">Doly ady</label>
              <TextCell><TextBox id="fullname" /></TextCell>
              <SearchCell><RaisedButton type="button" $w={35} $h={57} aria-label="Find client"><BlueMagnifier /></RaisedButton></SearchCell>
              <LockCell><SmallLock /></LockCell>
            </VisitForm>
            <ClientBox>
              <ClientTable>
                <thead><tr><ClientTh>Müşderiler - 0</ClientTh><ClientTh $w="88px">Karta</ClientTh><ClientTh $w="58px">Geldi</ClientTh></tr></thead>
              </ClientTable>
            </ClientBox>
            <ActionBar>
              <Action type="button" aria-label="Stop"><Hand /></Action>
              <Action type="button" aria-label="Information"><InfoDot /></Action>
              <Action type="button" aria-label="Pin"><GreenPin /></Action>
              <Action type="button" aria-label="Notify"><Bell /></Action>
            </ActionBar>
          </Panel>
        </LeftColumn>

        <Workspace>
          {ROOMS.map((room) => <RoomSheet key={room.title} {...room} />)}
        </Workspace>
      </Body>

      <Footer>
        <TabStrip>
          <DocTab>
            <WindowIcon />
            <DocLink href="#records">Hasaba alyş</DocLink>
            <button type="button" aria-label="Close tab"><Cross color={ACCENT} /></button>
          </DocTab>
        </TabStrip>
        <StatusBar>
          <StatusItem $w={200} $inset={0}><InfoDot />7.2.9060.10 Standard</StatusItem>
          <StatusSep />
          <StatusItem $w={169}><Database />localhost (utf8)</StatusItem>
          <StatusSep />
          <StatusItem $w={178}><SmallUser />NIKOLAY (MAIN)</StatusItem>
          <StatusSep />
          <StatusItem $w={148} $clock><Day31 />25.09.2024</StatusItem>
          <StatusSep />
          <StatusItem $w={148} $inset={34} $clock>00:00:00:001</StatusItem>
          <StatusSep />
          <StatusItem $w={70}>14:00</StatusItem>
          <Spacer />
          <StatusSep />
          <StatusItem $w={30}>
            <Svg size={16} box={16}>
              {[[13, 2], [8, 8], [13, 8], [3, 14], [8, 14], [13, 14]].map(([x, y]) => <rect key={`${x}-${y}`} x={x - 1} y={y - 1} width="2.500" height="2.500" fill="#888" />)}
            </Svg>
          </StatusItem>
        </StatusBar>
      </Footer>
    </Window>
  );
}
